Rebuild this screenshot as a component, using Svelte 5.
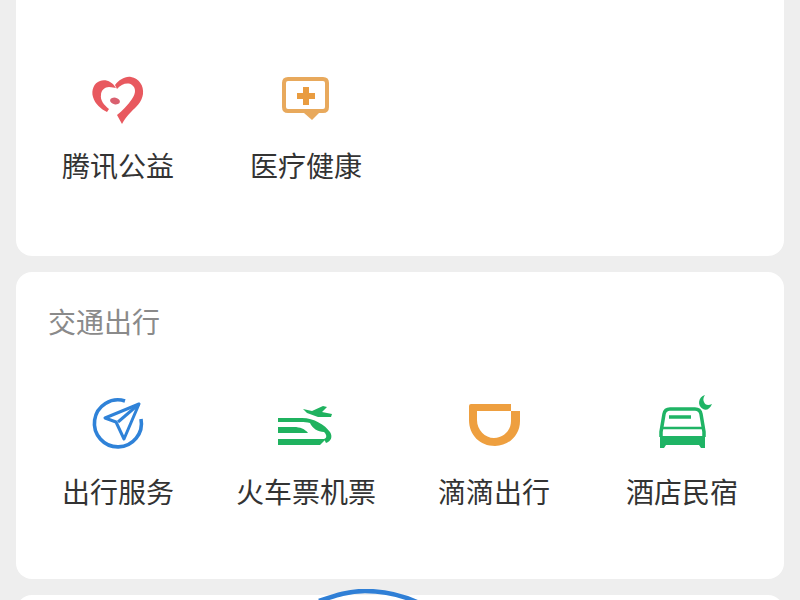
<script>
  const services = [{ label: '腾讯公益', icon: 'heart' }, { label: '医疗健康', icon: 'health' }];
  const transport = [
    { label: '出行服务', icon: 'nav' },
    { label: '火车票机票', icon: 'train' },
    { label: '滴滴出行', icon: 'didi' },
    { label: '酒店民宿', icon: 'hotel' }
  ];
</script>

{#snippet tile(item)}
  <div class="tile">
    <svg class="icon" width="64" height="64" viewBox="0 0 64 64" fill="none">
      {#if item.icon === 'heart'}
        <path d="M30 20 C26 13 19 11 14 13 C8 15 5 22 7 29 C9 36 15 41 21 44 L23 41 C18 37 14 32 15 27 C15 22 19 19 23 19 C26 19 28 20 30 20 Z" fill="#e8595f" />
        <path d="M29 17 C33 12 39 8 45 9 C53 10 58 18 57 26 C56 34 50 39 45 44 C41 48 38 52 36 56 L31 47 C36 43 42 37 46 31 C50 25 50 20 46 17 C42 14 35 16 31 21 Z" fill="#e8595f" />
        <ellipse cx="29" cy="33" rx="5" ry="3.4" transform="rotate(12 29 33)" fill="#d9606f" />
      {:else if item.icon === 'health'}
        <path d="M14 11 H49 Q53 11 53 15 V39 Q53 43 49 43 H14 Q10 43 10 39 V15 Q10 11 14 11 Z" stroke="#e8a95c" stroke-width="4" />
        <path d="M30 45 H45 L38 52 Z" fill="#e8a95c" />
        <path d="M32 19 V37 M23 28 H41" stroke="#e99c40" stroke-width="6" />
      {:else if item.icon === 'nav'}
        <path d="M39 7 A23.5 23.5 0 1 0 55 25" stroke="#2f82d8" stroke-width="3.6" />
        <path d="M53 10 L19 24 L30 28 L38 45 Z" stroke="#2f82d8" stroke-width="3" stroke-linejoin="round" />
        <path d="M53 10 L32 28" stroke="#2f82d8" stroke-width="3" />
      {:else if item.icon === 'train'}
        <path d="M29 15 L38 17 L49 12 L53 13 L48 18 L58 20 L57 23 L44 23 L33 19 Z" fill="#1fb25f" />
        <path d="M4 24 H28 C40 24 51 31 56 38 C59 43 57 47 52 49 L50 45 C53 44 53 41 50 38 C44 38 38 34 36 29 C33 28 30 28 27 28 H4 Z" fill="#1fb25f" />
        <path d="M4 33 H20 C26 33 31 35 34 39 H4 Z" fill="#1fb25f" />
        <path d="M4 45 H52 L46 51 H4 Z" fill="#1fb25f" />
      {:else if item.icon === 'didi'}
        <path d="M9 10 H49 V17 H58 V27 C58 41 47 52 33 52 C18 52 7 41 7 26 V12 Q7 10 9 10 Z M15 17 V26 C15 36 23 44 32 44 C42 44 49 36 49 27 V17 Z" fill="#ee9f3f" fill-rule="evenodd" />
      {:else}
        <path d="M55 1 C48 3 47 12 53 15 C56 17 60 15 62 10 C58 12 55 11 54 8 C53 6 53 4 55 1 Z" fill="#1fb465" />
        <path d="M11 43 V38 L14 20 Q15 15 20 15 H45 Q50 15 51 20 L54 38 V43" stroke="#1fb465" stroke-width="3.5" />
        <path d="M19 23 H41" stroke="#1fb465" stroke-width="3.5" />
        <path d="M13 34 H52" stroke="#1fb465" stroke-width="2.5" />
        <path d="M10 42 H55 V54 H51 L49 51 H16 L14 54 H10 Z" fill="#1fb465" />
      {/if}
    </svg>
    <span class="label">{item.label}</span>
  </div>
{/snippet}

<main class="page">
  <section class="card first">
    <div class="grid">
      {#each services as item}
        {@render tile(item)}
      {/each}
    </div>
  </section>

  <section class="card second">
    <h2 class="title">交通出行</h2>
    <div class="grid">
      {#each transport as item}
        {@render tile(item)}
      {/each}
    </div>
  </section>

  <section class="card third">
    <svg class="scribble" width="120" height="14" viewBox="0 0 120 14" fill="none">
      <path d="M2 12 C20 6 32 2 48 2 C66 2 85 6 102 14" stroke="#2f7fd6" stroke-width="4.5" />
    </svg>
  </section>
</main>

<style>
  :global(body) {
    background: #eeeeee;
  }

  .page {
    height: 600px;
    overflow: hidden;
    display: flex;
    flex-direction: column;
    gap: 16px;
    padding: 0 16px;
    font-family: "Noto Sans CJK SC", "Liberation Sans", sans-serif;
  }

  .card {
    background: #fff;
    border-radius: 16px;
    padding: 0 8px;
    flex: none;
  }

  .first {
    height: 256px;
    border-radius: 0 0 16px 16px;
    padding-top: 68px;
    box-sizing: border-box;
  }

  .second {
    height: 307px;
    box-sizing: border-box;
    padding-top: 29px;
  }

  .third {
    height: 60px;
    position: relative;
  }

  .scribble {
    position: absolute;
    left: 301px;
    top: -6px;
  }

  .title {
    margin: 0 0 53px 24px;
    font-size: 28px;
    line-height: 40px;
    font-weight: 400;
    color: #8a8a8a;
  }

  .grid {
    display: grid;
    grid-template-columns: repeat(4, 188px);
  }

  .tile {
    display: flex;
    flex-direction: column;
    align-items: center;
    gap: 13px;
    color: #333;
  }

  .icon {
    display: block;
  }

  .label {
    font-size: 28px;
    line-height: 40px;
    white-space: nowrap;
  }
</style>
